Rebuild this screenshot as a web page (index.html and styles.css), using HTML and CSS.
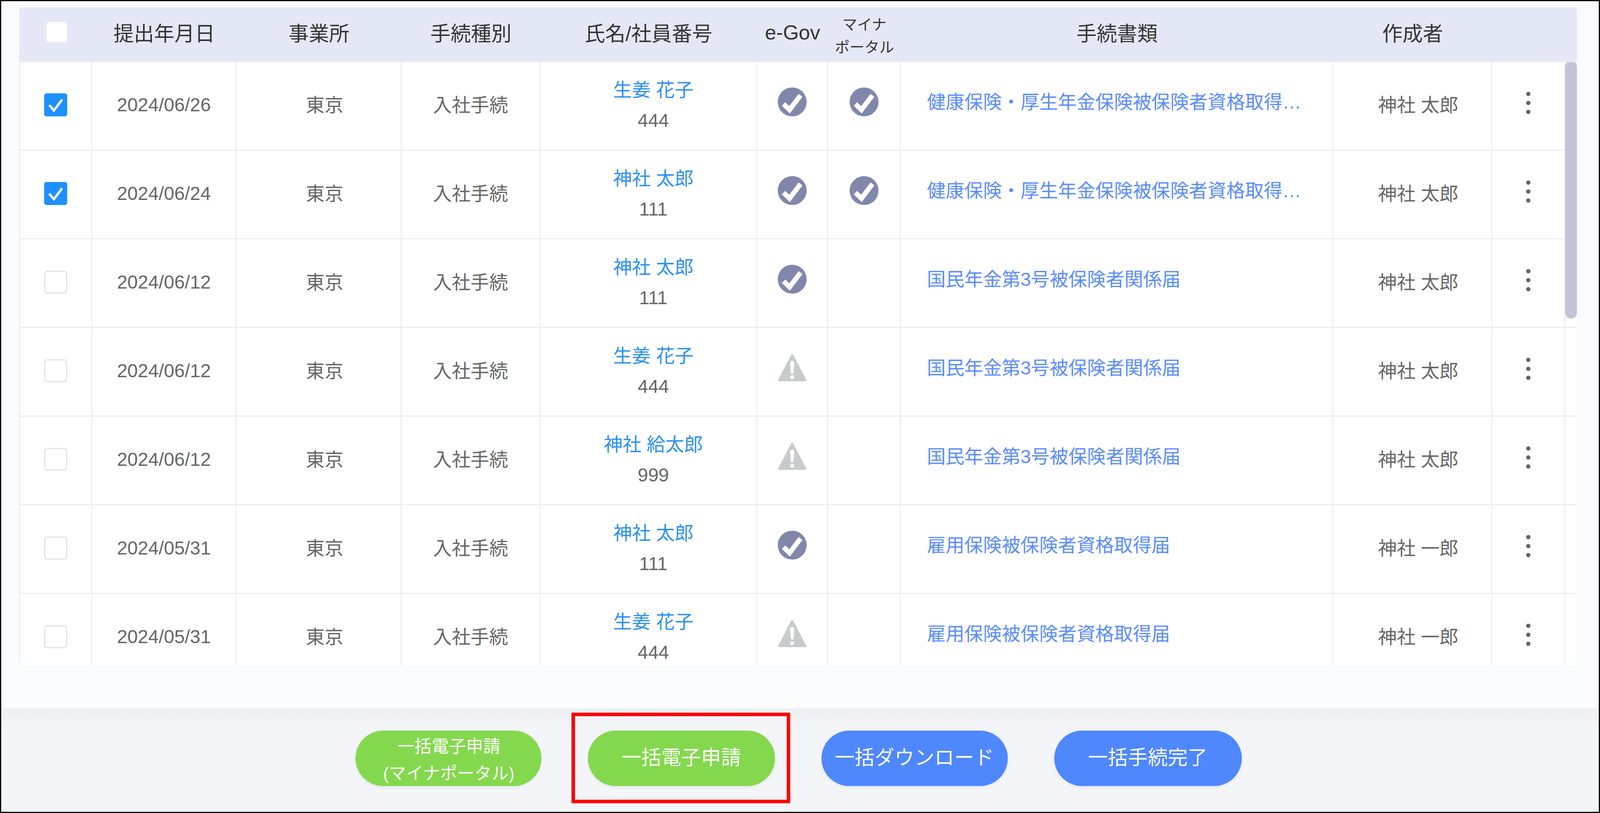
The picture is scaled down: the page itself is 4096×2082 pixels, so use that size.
FILE: index.html
```html
<!DOCTYPE html>
<html lang="ja">
<head>
<meta charset="utf-8">
<title>一括電子申請</title>
<link rel="stylesheet" href="styles.css">
</head>
<body>
<svg class="defs" width="0" height="0" aria-hidden="true">
  <symbol id="done" viewBox="0 0 100 100">
    <circle cx="50" cy="50" r="50" fill="#8087ab"/>
    <path d="M20 57 L41 77 L79 27" fill="none" stroke="#fff" stroke-width="17"/>
  </symbol>
  <symbol id="warn" viewBox="0 0 80 80">
    <path d="M40 5 L76 74 L4 74 Z" fill="#c8cbcb" stroke="#c8cbcb" stroke-width="6" stroke-linejoin="round"/>
    <path d="M34 27 Q34 21 40 21 Q46 21 46 27 L43.5 56 L36.5 56 Z" fill="#fff"/>
    <circle cx="40" cy="66" r="5.5" fill="#fff"/>
  </symbol>
  <symbol id="tick" viewBox="0 0 59 59">
    <path d="M13 30 L25 44 L46 16" fill="none" stroke="#fff" stroke-width="6"/>
  </symbol>
</svg>
<div class="frame">
  <main class="content">
    <section class="table">
      <div class="row head">
        <div class="hc"><span class="box head-box"></span></div>
        <div class="hc">提出年月日</div>
        <div class="hc">事業所</div>
        <div class="hc">手続種別</div>
        <div class="hc">氏名/社員番号</div>
        <div class="hc">e-Gov</div>
        <div class="hc small">マイナ<br>ポータル</div>
        <div class="hc">手続書類</div>
        <div class="hc">作成者</div>
        <div class="hc"></div>
        <div class="hc"></div>
      </div>
      <div class="body">
        <div class="row item">
          <div class="c first"><span class="box checked"><svg class="tick"><use href="#tick"/></svg></span></div>
          <div class="c date">2024/06/26</div>
          <div class="c office">東京</div>
          <div class="c">入社手続</div>
          <div class="c name"><a class="who">生姜 花子</a><span>444</span></div>
          <div class="c ico"><svg class="state"><use href="#done"/></svg></div>
          <div class="c ico"><svg class="state"><use href="#done"/></svg></div>
          <div class="c doc"><a>健康保険・厚生年金保険被保険者資格取得…</a></div>
          <div class="c author">神社 太郎</div>
          <div class="c more"><i></i><i></i><i></i></div>
          <div class="gutter"></div>
        </div>
        <div class="row item">
          <div class="c first"><span class="box checked"><svg class="tick"><use href="#tick"/></svg></span></div>
          <div class="c date">2024/06/24</div>
          <div class="c office">東京</div>
          <div class="c">入社手続</div>
          <div class="c name"><a class="who">神社 太郎</a><span>111</span></div>
          <div class="c ico"><svg class="state"><use href="#done"/></svg></div>
          <div class="c ico"><svg class="state"><use href="#done"/></svg></div>
          <div class="c doc"><a>健康保険・厚生年金保険被保険者資格取得…</a></div>
          <div class="c author">神社 太郎</div>
          <div class="c more"><i></i><i></i><i></i></div>
          <div class="gutter"></div>
        </div>
        <div class="row item">
          <div class="c first"><span class="box"></span></div>
          <div class="c date">2024/06/12</div>
          <div class="c office">東京</div>
          <div class="c">入社手続</div>
          <div class="c name"><a class="who">神社 太郎</a><span>111</span></div>
          <div class="c ico"><svg class="state"><use href="#done"/></svg></div>
          <div class="c ico"></div>
          <div class="c doc"><a>国民年金第3号被保険者関係届</a></div>
          <div class="c author">神社 太郎</div>
          <div class="c more"><i></i><i></i><i></i></div>
          <div class="gutter"></div>
        </div>
        <div class="row item">
          <div class="c first"><span class="box"></span></div>
          <div class="c date">2024/06/12</div>
          <div class="c office">東京</div>
          <div class="c">入社手続</div>
          <div class="c name"><a class="who">生姜 花子</a><span>444</span></div>
          <div class="c ico"><svg class="state"><use href="#warn"/></svg></div>
          <div class="c ico"></div>
          <div class="c doc"><a>国民年金第3号被保険者関係届</a></div>
          <div class="c author">神社 太郎</div>
          <div class="c more"><i></i><i></i><i></i></div>
          <div class="gutter"></div>
        </div>
        <div class="row item">
          <div class="c first"><span class="box"></span></div>
          <div class="c date">2024/06/12</div>
          <div class="c office">東京</div>
          <div class="c">入社手続</div>
          <div class="c name"><a class="who">神社 給太郎</a><span>999</span></div>
          <div class="c ico"><svg class="state"><use href="#warn"/></svg></div>
          <div class="c ico"></div>
          <div class="c doc"><a>国民年金第3号被保険者関係届</a></div>
          <div class="c author">神社 太郎</div>
          <div class="c more"><i></i><i></i><i></i></div>
          <div class="gutter"></div>
        </div>
        <div class="row item">
          <div class="c first"><span class="box"></span></div>
          <div class="c date">2024/05/31</div>
          <div class="c office">東京</div>
          <div class="c">入社手続</div>
          <div class="c name"><a class="who">神社 太郎</a><span>111</span></div>
          <div class="c ico"><svg class="state"><use href="#done"/></svg></div>
          <div class="c ico"></div>
          <div class="c doc"><a>雇用保険被保険者資格取得届</a></div>
          <div class="c author">神社 一郎</div>
          <div class="c more"><i></i><i></i><i></i></div>
          <div class="gutter"></div>
        </div>
        <div class="row item">
          <div class="c first"><span class="box"></span></div>
          <div class="c date">2024/05/31</div>
          <div class="c office">東京</div>
          <div class="c">入社手続</div>
          <div class="c name"><a class="who">生姜 花子</a><span>444</span></div>
          <div class="c ico"><svg class="state"><use href="#warn"/></svg></div>
          <div class="c ico"></div>
          <div class="c doc"><a>雇用保険被保険者資格取得届</a></div>
          <div class="c author">神社 一郎</div>
          <div class="c more"><i></i><i></i><i></i></div>
          <div class="gutter"></div>
        </div>
        <div class="thumb"></div>
      </div>
    </section>
  </main>
  <footer class="footer">
    <button class="btn green two">一括電子申請<br>(マイナポータル)</button>
    <div class="marked"><button class="btn green w2">一括電子申請</button></div>
    <button class="btn blue">一括ダウンロード</button>
    <button class="btn blue w3">一括手続完了</button>
  </footer>
</div>
</body>
</html>
```
FILE: styles.css
```css
* { box-sizing: border-box; }
html, body { margin: 0; padding: 0; }
body {
  width: 4096px;
  height: 2082px;
  overflow: hidden;
  font-family: "Liberation Sans", "Noto Sans CJK JP", sans-serif;
  color: #666;
}
.defs { position: absolute; }
.frame {
  width: 4096px;
  height: 2082px;
  border: 3px solid #000;
  display: flex;
  flex-direction: column;
  background: #fafbfd;
}
.content {
  flex: 1;
  min-height: 0;
  padding: 16px 56px 110px 46px;
  display: flex;
}
.table {
  flex: 1;
  display: flex;
  flex-direction: column;
  min-height: 0;
}
.row {
  display: grid;
  grid-template-columns: 187px 369px 423px 355px 555px 182px 186px 1107px 407px 187px 1fr;
}
.head {
  height: 140px;
  flex: none;
  background: #e4e8f6;
  border-bottom: 3px solid #ececec;
  border-radius: 6px 6px 0 0;
  color: #333;
  font-size: 52px;
}
.hc {
  display: flex;
  align-items: center;
  justify-content: center;
  text-align: center;
  padding-bottom: 10px;
}
.small {
  font-size: 38px;
  line-height: 58px;
  padding: 8px 0 0;
}
.box {
  display: block;
  width: 59px;
  height: 59px;
  background: #fff;
  border: 3px solid #e3e3e3;
  border-radius: 8px;
}
.head-box {
  width: 57px;
  height: 57px;
  border-color: #e9ebf2;
  margin-left: 6px;
}
.checked {
  background: #1e90ff;
  border: 0;
  border-radius: 6px;
}
.tick { display: block; width: 59px; height: 59px; }
.body {
  position: relative;
  flex: 1;
  min-height: 0;
  overflow: hidden;
  background: #fff;
  border-radius: 0 0 8px 8px;
}
.item {
  height: 227px;
  border-bottom: 3px solid #ececec;
  font-size: 48px;
}
.c {
  display: flex;
  align-items: center;
  justify-content: center;
  border-right: 2px solid #e8e8e8;
  padding-bottom: 12px;
}
.first { border-left: 2px solid #e8e8e8; padding-bottom: 6px; }
.date { padding-bottom: 6px; }
.office { padding-left: 31px; }
.author { padding-left: 30px; }
.name {
  flex-direction: column;
  line-height: 78px;
  padding: 0 0 2px 26px;
}
.who { color: #2a90f5; }
.ico { padding-bottom: 20px; }
.state { display: block; width: 74px; height: 74px; }
.doc {
  justify-content: flex-start;
  padding: 0 0 28px 67px;
  color: #5a8cff;
}
.doc a { letter-spacing: -0.1px; }
.more {
  flex-direction: column;
  gap: 12px;
  padding-bottom: 16px;
}
.more i {
  display: block;
  width: 11px;
  height: 11px;
  border-radius: 50%;
  background: #666;
}
.thumb {
  position: absolute;
  top: -3px;
  right: 0;
  width: 30px;
  height: 660px;
  border-radius: 15px;
  background: #c0c4d6;
}
.footer {
  flex: none;
  height: 265px;
  padding: 57px 8px 0 0;
  display: flex;
  align-items: flex-start;
  justify-content: center;
  gap: 119px;
  background: linear-gradient(#eceff4, #f3f5f9 50px);
}
.btn {
  width: 477px;
  height: 142px;
  border: 0;
  border-radius: 71px;
  color: #fff;
  font-family: inherit;
  font-size: 51px;
  padding: 0 0 13px;
  box-shadow: 0 3px 8px rgba(0, 0, 0, 0.06);
}
.green { background: #84d84e; }
.blue { background: #4f87ff; }
.two {
  font-size: 44px;
  line-height: 69px;
  width: 476px;
  padding: 6px 0 0 3px;
}
.w2 { width: 479px; display: block; }
.w3 { width: 480px; }
.marked { position: relative; }
.marked::after {
  content: "";
  position: absolute;
  top: -46px;
  bottom: -44px;
  left: -42px;
  right: -39px;
  border: 9px solid #f00;
}
```
